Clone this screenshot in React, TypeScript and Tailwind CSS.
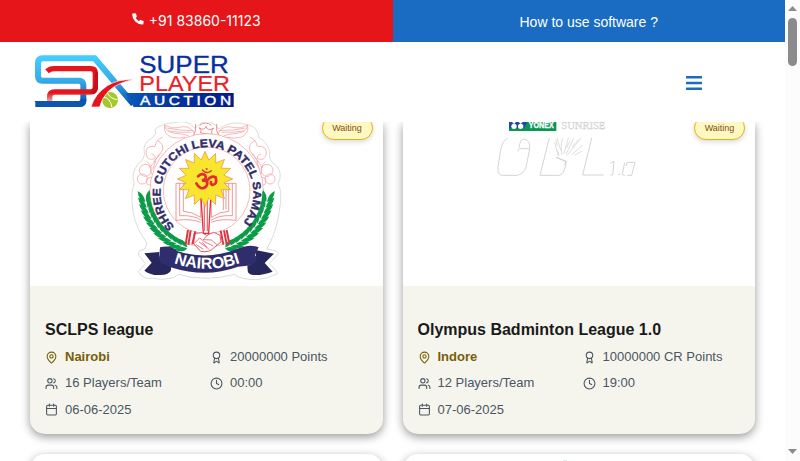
import React from "react";
import { Award, Calendar, Clock, MapPin, Users } from "lucide-react";

function BrandLogo() {
  return (
    <svg viewBox="105 162 600 165" className="-mt-px block h-[55px] w-[200px] overflow-visible" role="img">
      <defs>
        <linearGradient id="brandBlue" x1="0" y1="0" x2="0" y2="1">
          <stop offset="0" stopColor="#42ccff" />
          <stop offset="0.5" stopColor="#36a9e8" />
          <stop offset="1" stopColor="#0a4fae" />
        </linearGradient>
        <linearGradient id="brandBar" x1="0" y1="0" x2="1" y2="0">
          <stop offset="0" stopColor="#0b5cba" />
          <stop offset="0.4" stopColor="#0635a0" />
          <stop offset="1" stopColor="#021b8c" />
        </linearGradient>
        <linearGradient id="brandRed" x1="0" y1="0" x2="0" y2="1">
          <stop offset="0" stopColor="#e5151d" />
          <stop offset="0.75" stopColor="#e5151d" />
          <stop offset="1" stopColor="#f2a0a0" />
        </linearGradient>
      </defs>
      <path
        d="M106 312H238Q250 312 250 300V256Q250 242 236 242H128Q114 242 114 228V190Q114 175 129 175H284L400 312"
        fill="none" stroke="url(#brandBlue)" strokeWidth="18"
      />
      <path d="M104 303H236Q242 303 242 297H259V304Q257 321 240 321H124Q112 317 104 303Z" fill="#0c55b0" />
      <path d="M376 279H701V321H401Z" fill="url(#brandBar)" />
      <path
        d="M141 214Q150 206 162 206H272Q286 206 286 220V262Q286 276 272 276H164Q149 276 149 291V303"
        fill="none" stroke="url(#brandRed)" strokeWidth="16"
      />
      <path d="M286 208Q286 270 270 279L281 283Q293 274 294 264V218Z" fill="#c70e19" />
      <circle cx="330" cy="300" r="24" fill="#a5c82c" />
      <path d="M308 291Q331 292 336 322M323 280Q330 296 352 299" fill="none" stroke="#fff" strokeWidth="3" />
      <path d="M273 321Q284 282 322 257Q354 237 400 239Q352 248 326 273Q305 294 299 321Z" fill="#e5151d" stroke="#fff" strokeWidth="2" />
      <g fontFamily="'Liberation Sans', Arial, sans-serif">
        <text x="418" y="218" fontSize="69" fill="#082f9f" stroke="#082f9f" strokeWidth="1" textLength="268" lengthAdjust="spacingAndGlyphs">SUPER</text>
        <text x="418" y="273" fontSize="64" fill="#ec2026" stroke="#ec2026" strokeWidth="0.5" textLength="272" lengthAdjust="spacingAndGlyphs">PLAYER</text>
        <text x="420" y="315" fontSize="39" letterSpacing="9" fill="#fff" stroke="#fff" strokeWidth="1.2" textLength="284" lengthAdjust="spacingAndGlyphs">AUCTION</text>
      </g>
    </svg>
  );
}

const sunPoints = Array.from({ length: 32 }, (_, i) => {
  const radius = i % 2 === 0 ? 83 : 58;
  const angle = (i * Math.PI) / 16 - Math.PI / 2;
  return `${255 + radius * Math.cos(angle)},${192 + radius * Math.sin(angle)}`;
}).join(" ");

// Leaves follow an arc around the lower half of the seal.
const leaves = Array.from({ length: 12 }, (_, i) => {
  const deg = 173 - i * 5.6;
  const rad = (deg * Math.PI) / 180;
  return { x: 255 + 182 * Math.cos(rad), y: 225 + 182 * Math.sin(rad), turn: deg };
});

function Laurel() {
  return (
    <g fill="#0b9b49">
      {leaves.map((l) => (
        <g key={l.turn} transform={`translate(${l.x} ${l.y}) rotate(${l.turn})`}>
          <path d="M0 -14Q20 -8 19 22Q0 10 0 -14Z" />
          <path d="M-2 -14Q-20 -5 -17 20Q-1 10 -2 -14Z" />
        </g>
      ))}
    </g>
  );
}

function Flourish() {
  return (
    <g fill="none" stroke="#f3a0a0" strokeWidth="2.2">
      <path d="M223 55Q208 27 174 38Q154 43 134 30Q136 52 166 55Q188 56 206 62M134 31Q129 57 155 67Q180 72 196 66M145 48Q176 53 213 52M140 39Q175 47 221 47" />
      <path d="M128 66Q108 74 105 94Q76 91 78 117Q82 139 105 131Q106 119 94 117M112 76Q132 86 128 105Q119 121 100 142M80 139Q94 148 90 159" />
      <circle cx="76" cy="166" r="18" />
      <circle cx="67" cy="192" r="15" />
      <circle cx="91" cy="199" r="12" />
      <path d="M99 145Q88 155 94 178M107 138L98 164M118 116L101 145" />
    </g>
  );
}

function SamajEmblem() {
  return (
    <svg viewBox="0 21 525 492" className="ml-[90px] block h-[164px] w-[175px]">
      <path
        d="M225 40Q201 12 164 23Q126 24 106 42Q111 58 98 68Q67 82 73 112Q75 133 54 147Q31 177 43 207Q31 227 39 291Q50 345 81 384L75 402Q51 405 56 420L76 446L55 470Q68 494 98 490Q124 496 151 490Q166 487 174 478Q260 502 343 478Q361 494 411 494Q440 492 472 476Q474 470 448 446L476 415Q472 406 440 402Q469 354 478 289Q489 229 474 207Q491 174 466 149Q445 140 449 108Q438 77 417 69Q414 38 387 30Q331 13 296 42Q275 12 245 22Z"
        fill="#fff" stroke="#d3d5d7" strokeWidth="2.5"
      />
      <Flourish />
      <g transform="translate(517 0) scale(-1 1)"><Flourish /></g>
      <path d="M227 27Q229 50 219 65H298Q286 48 290 27M239 31Q257 17 274 31M242 54Q246 46 237 38Q253 49 258 34Q264 51 281 39Q270 51 278 59Z" fill="none" stroke="#ed7777" strokeWidth="2.5" />
      <circle cx="260" cy="226" r="170" fill="#fff" stroke="#f29898" strokeWidth="2" />
      <Laurel />
      <g transform="translate(517 0) scale(-1 1)"><Laurel /></g>
      <circle cx="260" cy="226" r="130" fill="#fff" stroke="#f29898" strokeWidth="2" />
      <g fill="#fff" stroke="#ef7d7d" strokeWidth="2.4">
        <path d="M185 205H168V316Q213 310 243 322M179 205V302Q222 300 244 316M185 205Q220 204 242 225V307Q215 289 190 289V206" />
        <path d="M331 205H348V316Q303 310 273 322M337 205V302Q295 300 273 316M331 205Q296 204 274 225V307Q301 289 326 289V206M318 212V283M310 218V285" />
        <path d="M242 235L250 355H266L273 235Z" stroke="#df2e3b" strokeWidth="4" />
        <path d="M253 245V348M262 247V349" stroke="#e77379" strokeWidth="4" />
      </g>
      <polygon points={sunPoints} fill="#f7e62d" stroke="#ed8543" strokeWidth="2" />
      <g fill="none" stroke="#e42a34" strokeWidth="8" strokeLinecap="round">
        <path d="M234 184Q244 173 255 180Q263 193 246 196Q270 197 258 215Q241 228 229 205M260 199Q274 179 287 187Q293 208 277 210Q271 207 273 201" />
        <path d="M247 165Q260 179 274 167" strokeWidth="4" />
        <circle cx="260" cy="162" r="1" strokeWidth="4" />
      </g>
      <g fill="#fff" stroke="#df3543" strokeWidth="2.5">
        <path d="M222 356L245 353L260 361L281 352L300 361L303 381L282 398Q269 414 242 409L221 386Z" />
        <path d="M222 386L239 369L253 380L279 393M237 381L260 397M229 389L250 403M262 361L250 374L274 375L291 389M247 382L267 404" strokeWidth="2" fill="none" />
        <path d="M204 345L197 388M212 346L205 390M226 349L217 388M302 347L310 389M312 346L320 388M320 345L328 386" strokeWidth="6" />
      </g>
      <defs><path id="sealTextArc" d="M164 335A139 139 0 1 1 360 333" /></defs>
      <text fontFamily="'Liberation Sans', Arial, sans-serif" fontWeight="bold" fontSize="34" fill="#302d6b" stroke="#302d6b" strokeWidth="1.2">
        <textPath href="#sealTextArc" textLength="642" lengthAdjust="spacingAndGlyphs">SHREE CUTCHI LEVA PATEL SAMAJ</textPath>
      </text>
      <path d="M118 411L73 415L95 443L73 467Q94 482 120 480Q148 480 153 466V450Q112 445 118 411ZM403 404L462 416L434 444L458 470Q424 482 400 480Q382 477 383 465L382 452Q420 439 403 404Z" fill="#27265d" />
      <path d="M120 397Q153 388 171 408Q262 437 349 403Q389 385 416 397L405 420Q423 442 382 452L354 455Q259 490 157 458Q109 444 118 424Z" fill="#302d6c" />
      <path id="nairobiArc" d="M161 444Q262 479 366 442" fill="none" />
      <text fontFamily="'Liberation Sans', Arial, sans-serif" fontSize="48" fontWeight="bold" fill="#fff">
        <textPath href="#nairobiArc" textLength="204" lengthAdjust="spacingAndGlyphs">NAIROBI</textPath>
      </text>
    </svg>
  );
}

function BadmintonMark() {
  return (
    <svg viewBox="0 21 540 204" className="ml-[77.5px] block h-[68px] w-[180px]">
      <path d="M87 21H229V48H87Z" fill="#0a9653" />
      <path d="M87 21H142L132 40H87Z" fill="#1f4a9d" />
      <g fill="#fff"><circle cx="102" cy="34" r="8" /><circle cx="122" cy="34" r="8" /><path d="M96 21L102 27L108 21ZM116 21L122 27L128 21Z" /></g>
      <text x="146" y="40" fontFamily="'Liberation Sans', Arial, sans-serif" fontWeight="bold" fontSize="26" fill="#fff" stroke="#fff" strokeWidth="1" textLength="75" lengthAdjust="spacingAndGlyphs">YONEX</text>
      <text x="244" y="43" fontFamily="'Liberation Serif', 'Times New Roman', serif" fontSize="32" fill="#eee" stroke="#c9c9c9" strokeWidth="1" textLength="132" lengthAdjust="spacingAndGlyphs">SUNRISE</text>
      <g fill="none" stroke="#cbcbcb" strokeWidth="2.5">
        <path d="M83 70Q68 76 62 104L54 157Q52 181 68 181H110Q130 178 138 158L149 101H117L112 109M149 99Q151 75 132 72Q121 72 117 97M208 69L180 181H239Q256 173 258 140L228 127M335 69L308 180H371" />
        <path d="M227 74L232 92M231 69L242 106M247 70L243 96L246 119M265 69L252 116M281 70L258 118M303 69L261 122M308 90L275 120M306 108L284 121M224 82L235 123M231 105L237 120M271 76L259 99M295 73L276 98M230 127L260 139L251 151" strokeWidth="2" />
        <path d="M391 145L402 139L398 180H391M414 178H420M434 143L427 177Q426 181 435 181M442 181H455L465 142H442L438 153" />
      </g>
    </svg>
  );
}

type League = { name: string; place: string; points: string; team: string; time: string; date: string; art: React.ReactNode };

const leagues: League[] = [
  { name: "SCLPS league", place: "Nairobi", points: "20000000 Points", team: "16 Players/Team", time: "00:00", date: "06-06-2025", art: <SamajEmblem /> },
  { name: "Olympus Badminton League 1.0", place: "Indore", points: "10000000 CR Points", team: "12 Players/Team", time: "19:00", date: "07-06-2025", art: <BadmintonMark /> },
];

function Detail({ icon: Icon, text, strong = false }: { icon: typeof Award; text: string; strong?: boolean }) {
  return (
    <div className={strong ? "flex items-center gap-[7px] font-bold text-[#756008]" : "flex items-center gap-[7px] text-[#4b5563]"}>
      <Icon size={13} className="shrink-0" />
      <span>{text}</span>
    </div>
  );
}

function LeagueCard({ league }: { league: League }) {
  return (
    <article className="relative h-[312px] rounded-b-[15px] bg-[#f5f5ed] shadow-[0_3px_10px_rgba(0,0,0,0.4)]">
      <div className="h-[164px] overflow-hidden bg-white">{league.art}</div>
      <span className="absolute -top-[6px] right-[10px] flex h-6 w-[51px] items-center justify-center rounded-full border border-[#eab308] bg-[#fef9c3] pt-px text-[9px] text-[#854d0e] shadow-[0_2px_5px_rgba(0,0,0,0.15)]">Waiting</span>
      <div className="px-[15px] pt-8">
        <h2 className="text-base leading-6 font-bold text-[#1a1a1a]">{league.name}</h2>
        <div className="mt-[5px] grid grid-cols-[157.5px_157.5px] gap-x-[7.5px] gap-y-[6.3px] text-[13px] leading-5">
          <Detail icon={MapPin} text={league.place} strong />
          <Detail icon={Award} text={league.points} />
          <Detail icon={Users} text={league.team} />
          <Detail icon={Clock} text={league.time} />
          <Detail icon={Calendar} text={league.date} />
        </div>
      </div>
    </article>
  );
}

export default function App() {
  return (
    <div className="flex h-[461px] w-[800px] overflow-hidden bg-white font-['Liberation_Sans',Arial,sans-serif]">
      <div className="flex w-[785px] flex-col">
        <div className="grid h-[42px] grid-cols-2 text-white">
          <div className="flex items-center justify-center gap-[5px] bg-[#e51519] font-['Inter',sans-serif] text-sm">
            <svg viewBox="0 0 12 12" className="-mt-1 size-3" fill="currentColor">
              <path d="M.9.6 3.1.2Q3.7.1 3.9.7L4.8 3Q5 3.5 4.6 3.9L3.6 4.8Q4.8 7 7 8.2L8 7.1Q8.4 6.7 8.9 7L11.3 7.9Q11.8 8.2 11.7 8.7L11.3 10.9Q11.1 11.6 10.4 11.6Q6 11.5 3.2 8.6Q.3 5.8.2 1.4Q.2.8.9.6Z" />
            </svg>
            <span>+91 83860-11123</span>
          </div>
          <div className="flex items-center justify-center bg-[#196cc1] pt-px text-sm">How to use software ?</div>
        </div>
        <header className="flex h-20 items-center justify-between bg-white pr-[83px] pl-[35px]">
          <BrandLogo />
          <svg viewBox="0 0 16 14" className="mt-[2px] h-[14px] w-4" fill="#196cc1">
            <rect width="16" height="2.6" rx=".5" />
            <rect y="5.7" width="16" height="2.6" rx=".5" />
            <rect y="11.4" width="16" height="2.6" rx=".5" />
          </svg>
        </header>
        <main className="h-[339px] overflow-hidden px-[30px]">
          <div className="grid grid-cols-2 gap-5">
            {leagues.map((league) => <LeagueCard key={league.name} league={league} />)}
            <div className="h-20 rounded-t-[15px] bg-white shadow-[0_3px_10px_rgba(0,0,0,0.4)]" />
            <div className="h-20 rounded-t-[15px] bg-white pt-[6px] shadow-[0_3px_10px_rgba(0,0,0,0.4)]">
              <div className="mx-auto h-px w-1 -translate-x-[14px] bg-[#dcebf0]" />
            </div>
          </div>
        </main>
      </div>
      <div className="flex w-[15px] flex-col items-center bg-[#fcfcfc] text-[#8b8b8b]">
        <svg viewBox="0 0 9 5" className="mt-[6px] h-[5px] w-[9px]" fill="currentColor"><path d="M0 5L4.5 0L9 5Z" /></svg>
        <div className="mt-[7px] h-12 w-[9px] rounded-full bg-[#8b8b8b]" />
        <svg viewBox="0 0 9 5" className="mt-auto mb-[7px] h-[5px] w-[9px]" fill="currentColor"><path d="M0 0L4.5 5L9 0Z" /></svg>
      </div>
    </div>
  );
}
